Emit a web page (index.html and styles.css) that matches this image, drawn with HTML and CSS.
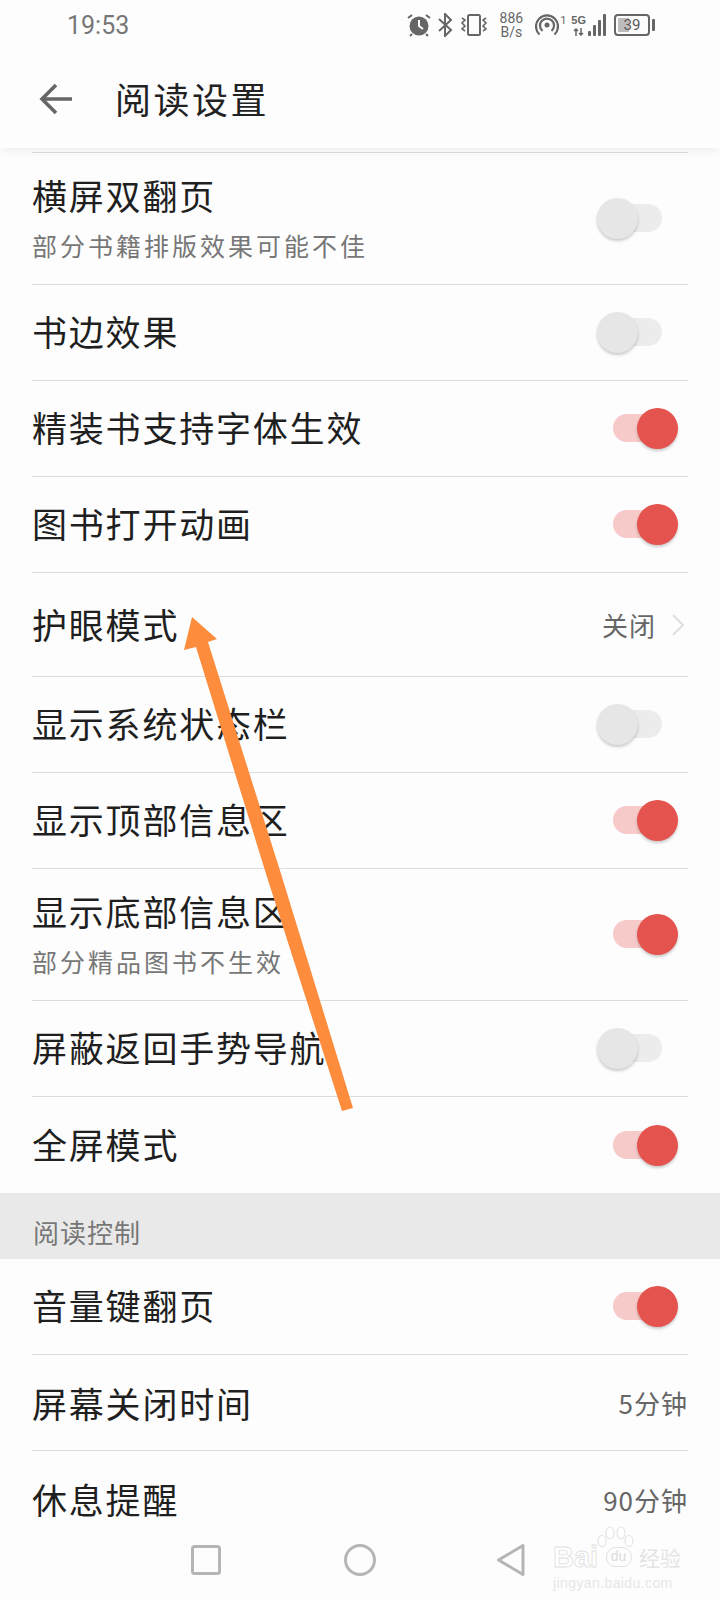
FILE: index.html
```html
<!DOCTYPE html>
<html lang="zh-CN">
<head>
  <meta charset="UTF-8" />
  <meta name="viewport" content="width=device-width, initial-scale=1.0" />
  <title>阅读设置</title>
  <link rel="stylesheet" href="styles.css">
</head>
<body>
  <div class="phone">
    <div class="header">
      <div class="statusbar">
        <span class="time">19:53</span>
        <div class="status-icons">
          <!-- alarm -->
          <svg class="ic-alarm" width="24" height="24" viewBox="0 0 24 24">
            <circle cx="12" cy="13" r="9.5" fill="#666" />
            <path d="M12 7v6l4 3" fill="none" stroke="#fdfdfd" stroke-width="2" />
            <path d="M1 5l4-3M23 5l-4-3M5 21l-2 2M19 21l2 2" fill="none" stroke="#666" stroke-width="2" />
          </svg>
          <!-- bluetooth -->
          <svg class="ic-bt" width="16" height="24" viewBox="0 0 16 24">
            <path d="M2 6l12 11-6 6V1l6 6L2 18" fill="none" stroke="#666" stroke-width="2" />
          </svg>
          <!-- vibrate -->
          <svg class="ic-vib" width="28" height="22" viewBox="0 0 28 22">
            <rect x="8" y="1" width="12" height="20" rx="1.5" fill="none" stroke="#666" stroke-width="2" />
            <path d="M2 4l3 2-3 3 3 3-3 3 3 2M26 4l-3 2 3 3-3 3 3 3-3 2" fill="none" stroke="#666" stroke-width="1.6" />
          </svg>
          <div class="speed"><span>886</span><span>B/s</span></div>
          <!-- hotspot -->
          <svg class="ic-hot" width="24" height="24" viewBox="0 0 24 24">
            <circle cx="12" cy="12" r="2.5" fill="#666" />
            <path d="M7.5 18a7 7 0 1 1 9 0M4.5 21.500a11 11 0 1 1 15 0" fill="none" stroke="#666" stroke-width="2.2" />
          </svg>
          <span class="hot-num">1</span>
          <div class="signal">
            <div class="net">
              <span class="net-5g">5G</span>
              <svg width="11" height="8" viewBox="0 0 11 8"><path d="M3 8V1M1 3l2-2 2 2M8 0v7M6 5l2 2 2-2" fill="none" stroke="#666" stroke-width="1.500" /></svg>
            </div>
            <div class="bars">
              <i class="bar bar-1"></i><i class="bar bar-2"></i><i class="bar bar-3"></i><i class="bar bar-4"></i>
            </div>
          </div>
          <div class="battery">
            <div class="batt-body"><i class="batt-fill"></i><span class="batt-num">39</span></div>
            <i class="batt-nub"></i>
          </div>
        </div>
      </div>
      <div class="toolbar">
        <svg class="back" width="34" height="32" viewBox="0 0 34 32">
          <path d="M33 16H3M17 2L3 16l14 14" fill="none" stroke="#666" stroke-width="3.6" />
        </svg>
        <h1>阅读设置</h1>
      </div>
    </div>

    <div class="list first">
      <div class="row tall">
        <div class="label"><div class="name">横屏双翻页</div><div class="sub">部分书籍排版效果可能不佳</div></div>
        <div class="switch"><i class="thumb"></i></div>
      </div>
      <div class="row">
        <div class="name">书边效果</div>
        <div class="switch"><i class="thumb"></i></div>
      </div>
      <div class="row">
        <div class="name">精装书支持字体生效</div>
        <div class="switch on"><i class="thumb"></i></div>
      </div>
      <div class="row">
        <div class="name">图书打开动画</div>
        <div class="switch on"><i class="thumb"></i></div>
      </div>
      <div class="row mid">
        <div class="name">护眼模式</div>
        <div class="value">关闭
          <svg class="chev" width="12" height="22" viewBox="0 0 12 22"><path d="M1 1l10 10L1 21" fill="none" stroke="#ddd" stroke-width="1.8" /></svg>
        </div>
      </div>
      <div class="row">
        <div class="name">显示系统状态栏</div>
        <div class="switch"><i class="thumb"></i></div>
      </div>
      <div class="row">
        <div class="name">显示顶部信息区</div>
        <div class="switch on"><i class="thumb"></i></div>
      </div>
      <div class="row tall">
        <div class="label"><div class="name">显示底部信息区</div><div class="sub">部分精品图书不生效</div></div>
        <div class="switch on"><i class="thumb"></i></div>
      </div>
      <div class="row">
        <div class="name">屏蔽返回手势导航</div>
        <div class="switch"><i class="thumb"></i></div>
      </div>
      <div class="row last">
        <div class="name">全屏模式</div>
        <div class="switch on"><i class="thumb"></i></div>
      </div>
    </div>

    <div class="section">阅读控制</div>

    <div class="list">
      <div class="row">
        <div class="name">音量键翻页</div>
        <div class="switch on"><i class="thumb"></i></div>
      </div>
      <div class="row">
        <div class="name flat">屏幕关闭时间</div>
        <div class="value plain">5分钟</div>
      </div>
      <div class="row last">
        <div class="name flat">休息提醒</div>
        <div class="value plain">90分钟</div>
      </div>
    </div>

    <div class="navbar">
      <svg width="32" height="32" viewBox="0 0 32 32"><rect x="2.500" y="2.500" width="27" height="27" rx="2" fill="none" stroke="#b5b5b5" stroke-width="3" /></svg>
      <svg class="nav-home" width="34" height="34" viewBox="0 0 34 34"><circle cx="17" cy="17" r="14.500" fill="none" stroke="#b5b5b5" stroke-width="3" /></svg>
      <svg width="30" height="34" viewBox="0 0 30 34"><path d="M27 2.500v29L2.500 17z" fill="none" stroke="#b5b5b5" stroke-width="3" stroke-linejoin="round" /></svg>
    </div>

    <div class="watermark">
      <svg class="paw" width="38" height="24" viewBox="0 0 38 24">
        <g fill="#fff" stroke="#e4e4e4" stroke-width="1.200">
          <ellipse cx="6" cy="15" rx="4" ry="5.500" /><ellipse cx="14" cy="7" rx="4" ry="6" />
          <ellipse cx="25" cy="7" rx="4" ry="6" /><ellipse cx="33" cy="15" rx="4" ry="5.500" />
        </g>
      </svg>
      <div class="wm-main">
        <span class="wm-bai">Bai</span>
        <span class="wm-du">du</span>
        <span class="wm-cn">经验</span>
      </div>
      <div class="wm-url">jingyan.baidu.com</div>
    </div>

    <!-- annotation drawn over the screenshot -->
    <svg class="arrow" width="720" height="1600" viewBox="0 0 720 1600">
      <path d="M192 617L217 639 208 642 282 877 353 1108 342 1111 267 877 196 647 184 650z" fill="#fd8c3c" />
    </svg>
  </div>
</body>
</html>
```

FILE: styles.css
```css
* {
  box-sizing: border-box;
}
html, body {
  margin: 0;
  padding: 0;
}
body {
  background: #fdfdfd;
  font-family: "Noto Sans CJK SC", "Noto Sans", sans-serif;
  color: #222;
}
.phone {
  width: 720px;
  height: 1600px;
  position: relative;
  overflow: hidden;
  background: #fdfdfd;
}

/* header */
.header {
  height: 148px;
  background: #fdfdfd;
  box-shadow: 0 2px 10px rgba(0, 0, 0, 0.07);
  position: relative;
  z-index: 1;
}
.statusbar {
  height: 50px;
  padding: 0 65px 0 67px;
  display: flex;
  align-items: center;
  justify-content: space-between;
}
.time {
  font-family: Roboto, sans-serif;
  font-size: 25px;
  color: #777;
}
.status-icons {
  display: flex;
  align-items: center;
  color: #666;
}
.ic-bt {
  margin-left: 6px;
}
.ic-vib {
  margin-left: 7px;
}
.speed {
  margin-left: 12px;
  display: flex;
  flex-direction: column;
  align-items: center;
  font-family: Roboto, sans-serif;
  font-size: 14px;
  line-height: 14px;
}
.ic-hot {
  margin-left: 12px;
}
.hot-num {
  font-family: Roboto, sans-serif;
  font-size: 11px;
  align-self: flex-start;
  margin: 0 0 0 1px;
  line-height: 20px;
}
.signal {
  margin-left: 5px;
  display: flex;
  align-items: flex-end;
  gap: 2px;
}
.net {
  display: flex;
  flex-direction: column;
  align-items: center;
  gap: 2px;
  font-family: "Liberation Sans", sans-serif;
  font-weight: 700;
  font-size: 11px;
  line-height: 11px;
}
.bars {
  display: flex;
  align-items: flex-end;
  gap: 2px;
}
.bar {
  width: 3px;
  background: #666;
  border-radius: 1px;
}
.bar-1 { height: 5px; }
.bar-2 { height: 11px; }
.bar-3 { height: 16px; }
.bar-4 { height: 22px; }
.battery {
  margin-left: 8px;
  display: flex;
  align-items: center;
  gap: 2px;
}
.batt-body {
  width: 36px;
  height: 22px;
  border: 2px solid #666;
  border-radius: 4px;
  position: relative;
  display: flex;
  align-items: center;
  justify-content: center;
}
.batt-fill {
  position: absolute;
  left: 2px;
  top: 2px;
  bottom: 2px;
  width: 11px;
  background: #bdbdbd;
}
.batt-num {
  position: relative;
  font-family: Roboto, sans-serif;
  font-size: 15px;
  color: #555;
}
.batt-nub {
  width: 3px;
  height: 12px;
  background: #666;
  border-radius: 1px;
}
.toolbar {
  height: 98px;
  display: flex;
  align-items: center;
  padding: 0 0 2px 39px;
}
.back {
  flex: none;
  margin-top: 2px;
}
.toolbar h1 {
  margin: 0 0 0 42px;
  font-size: 36px;
  line-height: 48px;
  font-weight: 400;
  letter-spacing: 2.500px;
  color: #222;
}

/* list */
.list {
  padding: 0 32px;
}
.list.first {
  padding-top: 4px;
}
.list.first .row.tall:first-child {
  border-top: 1px solid #ddd;
  height: 133px;
}
.row {
  height: 96px;
  display: flex;
  align-items: center;
  justify-content: space-between;
  border-bottom: 1px solid #ddd;
}
.row.tall {
  height: 132px;
}
.row.mid {
  height: 104px;
}
.row.last {
  border-bottom: 0;
}
.name {
  font-size: 35px;
  line-height: 46px;
  letter-spacing: 1.800px;
  color: #1f1f1f;
  margin-bottom: 3px;
}
.name.flat {
  margin-bottom: 0;
}
.row.mid .name {
  margin-bottom: 2px;
}
.label {
  margin-bottom: 3px;
}
.label .name {
  margin-bottom: 0;
}
.sub {
  font-size: 25px;
  line-height: 34px;
  letter-spacing: 3px;
  color: #777;
  margin-top: 10px;
}
.value {
  display: flex;
  align-items: center;
  gap: 16px;
  font-size: 26px;
  color: #666;
  margin-right: 4px;
  letter-spacing: 1px;
}
.value.plain {
  margin-right: 0;
}

/* switches */
.switch {
  width: 81px;
  height: 41px;
  position: relative;
  margin-right: 10px;
  flex: none;
}
.switch::before {
  content: "";
  position: absolute;
  left: 16px;
  right: 16px;
  top: 6px;
  height: 28px;
  border-radius: 14px;
  background: #ececec;
}
.thumb {
  position: absolute;
  left: 0;
  top: 0;
  width: 41px;
  height: 41px;
  border-radius: 50%;
  background: #e6e6e6;
  box-shadow: 0 2px 3px rgba(0, 0, 0, 0.2);
}
.switch.on::before {
  background: #f6cac8;
}
.switch.on .thumb {
  left: 40px;
  background: #e5534f;
}

/* section title */
.section {
  height: 66px;
  background: #e9e9e9;
  padding: 21px 0 0 33px;
  font-size: 26px;
  line-height: 36px;
  letter-spacing: 1px;
  color: #777;
}

/* bottom nav */
.navbar {
  position: absolute;
  left: 190px;
  top: 1543px;
  width: 336px;
  display: flex;
  align-items: center;
  justify-content: space-between;
}
.nav-home {
  margin-left: 2px;
}
.watermark {
  position: absolute;
  left: 553px;
  top: 1526px;
  width: 128px;
}
.paw {
  position: absolute;
  left: 43px;
  top: 0;
}
.wm-main {
  margin-top: 18px;
  height: 26px;
  display: flex;
  align-items: center;
  justify-content: space-between;
  white-space: nowrap;
  color: #fff;
}
.wm-bai {
  font-family: "Liberation Sans", sans-serif;
  font-size: 29px;
  font-weight: 700;
  -webkit-text-stroke: 0.800px #e0e0e0;
}
.wm-du {
  width: 26px;
  height: 20px;
  border: 1px solid #e2e2e2;
  border-radius: 10px 10px 9px 9px;
  font-family: "Liberation Sans", sans-serif;
  font-size: 14px;
  line-height: 17px;
  text-align: center;
  color: #dcdcdc;
}
.wm-cn {
  font-size: 21px;
  line-height: 26px;
  color: #e4e4e4;
}
.wm-url {
  margin-top: 5px;
  font-family: "Liberation Sans", sans-serif;
  font-size: 14px;
  line-height: 16px;
  letter-spacing: 0.400px;
  color: #e6e6e6;
  white-space: nowrap;
}

/* annotation arrow */
.arrow {
  position: absolute;
  left: 0;
  top: 0;
  z-index: 2;
  pointer-events: none;
}
```
